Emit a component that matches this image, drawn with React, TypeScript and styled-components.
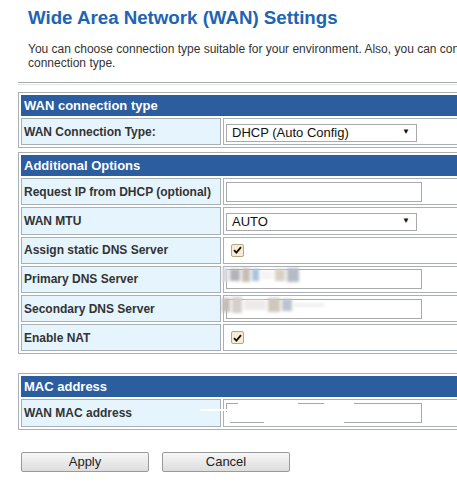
import React from 'react';
import styled, { createGlobalStyle } from 'styled-components';

const GlobalStyle = createGlobalStyle`
    html, body {
        margin: 0;
        padding: 0;
        background: #ffffff;
        overflow: hidden;
    }
    body {
        font-family: "Liberation Sans", Arial, sans-serif;
    }
`;

const Page = styled.div`
    width: 620px;
    padding-left: 18px;
`;

const Title = styled.h1`
    margin: 0;
    padding: 6px 0 0 10px;
    font-size: 18.7px;
    line-height: 24px;
    font-weight: bold;
    color: #1e64b4;
`;

const Description = styled.p`
    margin: 12px 0 0;
    padding-left: 10px;
    font-size: 12px;
    line-height: 14px;
    color: #333333;
    white-space: nowrap;
`;

const Rule = styled.div`
    margin-top: 12px;
    height: 1px;
    border-top: 1px solid #a9a9a9;
    border-bottom: 1px solid #e4e4e4;
`;

const Table = styled.table<{ $top: number }>`
    margin-top: ${(p) => p.$top}px;
    width: 600px;
    table-layout: fixed;
    border: 1px solid #a7afb7;
    border-spacing: 2px;
`;

const HeaderCell = styled.th`
    height: 21px;
    padding: 0 0 0 3px;
    background: #2c5d9f;
    color: #ffffff;
    font-size: 13px;
    font-weight: bold;
    text-align: left;
`;

const LabelCol = styled.col`
    width: 200px;
`;

const LabelCell = styled.td`
    height: 25.2px;
    padding: 0 0 0 2px;
    background: #e6f5fd;
    border: 1px solid #a7afb7;
    color: #333333;
    font-size: 12px;
    font-weight: bold;
    white-space: nowrap;
    overflow: hidden;
`;

const ValueCell = styled.td`
    height: 25.2px;
    padding: 0 0 0 2px;
    background: #ffffff;
    border: 1px solid #a7afb7;
    position: relative;
`;

const SelectBox = styled.div`
    position: relative;
    width: 191px;
    height: 18px;
`;

const Select = styled.select`
    appearance: none;
    width: 191px;
    height: 18px;
    margin: 0;
    padding: 0 0 0 5px;
    border: 1px solid #a9a9a9;
    border-radius: 0;
    background: #ffffff;
    color: #111111;
    font-family: "Liberation Sans", Arial, sans-serif;
    font-size: 13px;
    line-height: 16px;
`;

const Arrow = styled.span`
    position: absolute;
    right: 7px;
    top: 4px;
    font-size: 8px;
    line-height: 10px;
    color: #111111;
    pointer-events: none;
`;

const TextInput = styled.input`
    display: block;
    box-sizing: border-box;
    width: 196px;
    height: 20px;
    margin: 0;
    padding: 0 3px;
    border: 1px solid #a9a9a9;
    background: #ffffff;
    font-family: "Liberation Sans", Arial, sans-serif;
    font-size: 12px;
`;

const Check = styled.span`
    display: flex;
    align-items: center;
    justify-content: center;
    box-sizing: border-box;
    width: 13px;
    height: 13px;
    margin-left: 5px;
    border: 1px solid #b8a77e;
    border-radius: 2px;
    background: #f8ecd2;
`;

const Smudge = styled.div`
    position: absolute;
    left: -2px;
    top: 1px;
    display: flex;
    gap: 2px;
    align-items: center;
    filter: blur(1.6px);
    pointer-events: none;
`;

const Block = styled.span<{ $w: number; $h: number; $c: string }>`
    display: block;
    width: ${(p) => p.$w}px;
    height: ${(p) => p.$h}px;
    background: ${(p) => p.$c};
`;

const WhiteStreak = styled.div<{ $left: number; $top: number; $w: number; $h: number }>`
    position: absolute;
    left: ${(p) => p.$left}px;
    top: ${(p) => p.$top}px;
    width: ${(p) => p.$w}px;
    height: ${(p) => p.$h}px;
    background: #ffffff;
    pointer-events: none;
`;

const ButtonRow = styled.div`
    display: flex;
    gap: 13px;
    margin-top: 22px;
    padding-left: 3px;
`;

const Button = styled.button`
    width: 128px;
    height: 20px;
    padding: 0;
    border: 1px solid #9a9a9a;
    border-radius: 2px;
    background: linear-gradient(#f6f6f6, #dddddd);
    color: #222222;
    font-family: "Liberation Sans", Arial, sans-serif;
    font-size: 13px;
    cursor: pointer;
`;

const CheckMark = () => (
    <svg width="9" height="8" viewBox="0 0 9 8">
        <path d="M1 4.2 L3.4 6.6 L8 1.2" fill="none" stroke="#111" strokeWidth="1.8" />
    </svg>
);

const Dropdown = ({ value }: { value: string }) => (
    <SelectBox>
        <Select defaultValue={value}>
            <option>{value}</option>
        </Select>
        <Arrow>▼</Arrow>
    </SelectBox>
);

const primaryBlocks: [number, number, string][] = [
    [6, 14, '#d8dadf'],
    [10, 12, '#b4b3ba'],
    [8, 14, '#c6beb4'],
    [7, 12, '#a8c3dc'],
    [12, 8, '#f4f4f4'],
    [10, 12, '#d9d1c4'],
    [12, 14, '#b6bcc6'],
];

const secondaryBlocks: [number, number, string][] = [
    [8, 14, '#c3beba'],
    [10, 16, '#d4cfca'],
    [22, 10, '#ecebe8'],
    [12, 14, '#cfc7bb'],
    [10, 12, '#bcc4ce'],
    [30, 4, '#f0f0f0'],
];

const App = () => {
    return (
        <Page>
            <GlobalStyle />
            <Title>Wide Area Network (WAN) Settings</Title>
            <Description>
                You can choose connection type suitable for your environment. Also, you can configure parameters related to the
                <br />
                connection type.
            </Description>
            <Rule />

            <Table $top={7}>
                <colgroup>
                    <LabelCol />
                    <col />
                </colgroup>
                <tbody>
                    <tr>
                        <HeaderCell colSpan={2}>WAN connection type</HeaderCell>
                    </tr>
                    <tr>
                        <LabelCell>WAN Connection Type:</LabelCell>
                        <ValueCell>
                            <Dropdown value="DHCP (Auto Config)" />
                        </ValueCell>
                    </tr>
                </tbody>
            </Table>

            <Table $top={4}>
                <colgroup>
                    <LabelCol />
                    <col />
                </colgroup>
                <tbody>
                    <tr>
                        <HeaderCell colSpan={2}>Additional Options</HeaderCell>
                    </tr>
                    <tr>
                        <LabelCell>Request IP from DHCP (optional)</LabelCell>
                        <ValueCell>
                            <TextInput type="text" />
                        </ValueCell>
                    </tr>
                    <tr>
                        <LabelCell>WAN MTU</LabelCell>
                        <ValueCell>
                            <Dropdown value="AUTO" />
                        </ValueCell>
                    </tr>
                    <tr>
                        <LabelCell>Assign static DNS Server</LabelCell>
                        <ValueCell>
                            <Check>
                                <CheckMark />
                            </Check>
                        </ValueCell>
                    </tr>
                    <tr>
                        <LabelCell>Primary DNS Server</LabelCell>
                        <ValueCell>
                            <TextInput type="text" />
                            <Smudge>
                                {primaryBlocks.map(([w, h, c], i) => (
                                    <Block key={i} $w={w} $h={h} $c={c} />
                                ))}
                            </Smudge>
                        </ValueCell>
                    </tr>
                    <tr>
                        <LabelCell>Secondary DNS Server</LabelCell>
                        <ValueCell>
                            <TextInput type="text" />
                            <Smudge>
                                {secondaryBlocks.map(([w, h, c], i) => (
                                    <Block key={i} $w={w} $h={h} $c={c} />
                                ))}
                            </Smudge>
                        </ValueCell>
                    </tr>
                    <tr>
                        <LabelCell>Enable NAT</LabelCell>
                        <ValueCell>
                            <Check>
                                <CheckMark />
                            </Check>
                        </ValueCell>
                    </tr>
                </tbody>
            </Table>

            <Table $top={19}>
                <colgroup>
                    <LabelCol />
                    <col />
                </colgroup>
                <tbody>
                    <tr>
                        <HeaderCell colSpan={2}>MAC address</HeaderCell>
                    </tr>
                    <tr>
                        <LabelCell>WAN MAC address</LabelCell>
                        <ValueCell>
                            <TextInput type="text" />
                            <WhiteStreak $left={-24} $top={9} $w={30} $h={2} />
                            <WhiteStreak $left={14} $top={2} $w={60} $h={2} />
                            <WhiteStreak $left={100} $top={2} $w={30} $h={2} />
                            <WhiteStreak $left={2} $top={12} $w={4} $h={12} />
                            <WhiteStreak $left={40} $top={21} $w={80} $h={4} />
                        </ValueCell>
                    </tr>
                </tbody>
            </Table>

            <ButtonRow>
                <Button>Apply</Button>
                <Button>Cancel</Button>
            </ButtonRow>
        </Page>
    );
};

export default App;
